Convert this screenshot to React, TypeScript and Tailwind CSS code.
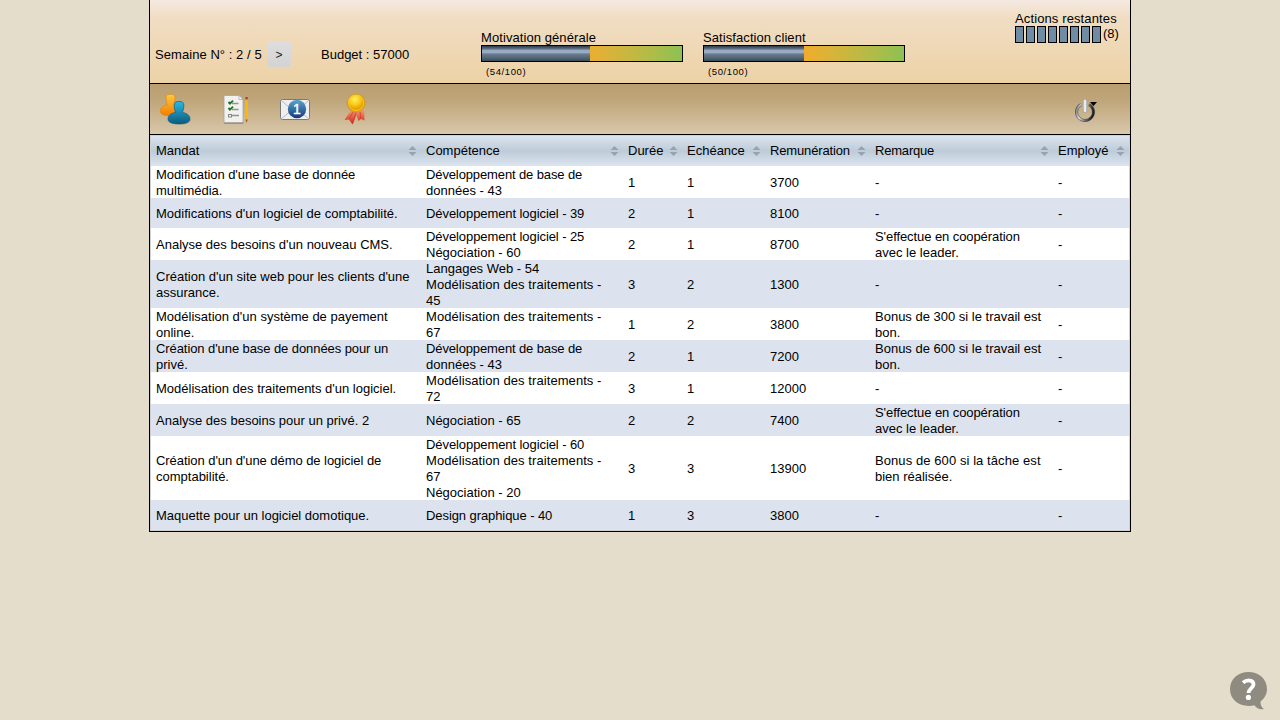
import React from 'react';

type Task = {
  title: string[];
  skills: string[];
  duration: number;
  due: number;
  pay: number;
  note: string[];
  height: string;
};

const tasks: Task[] = [
  { title: ["Modification d'une base de donnée", 'multimédia.'], skills: ['Développement de base de', 'données - 43'], duration: 1, due: 1, pay: 3700, note: ['-'], height: 'h-8' },
  { title: ["Modifications d'un logiciel de comptabilité."], skills: ['Développement logiciel - 39'], duration: 2, due: 1, pay: 8100, note: ['-'], height: 'h-[30px]' },
  { title: ["Analyse des besoins d'un nouveau CMS."], skills: ['Développement logiciel - 25', 'Négociation - 60'], duration: 2, due: 1, pay: 8700, note: ["S'effectue en coopération", 'avec le leader.'], height: 'h-8' },
  { title: ["Création d'un site web pour les clients d'une", 'assurance.'], skills: ['Langages Web - 54', 'Modélisation des traitements -', '45'], duration: 3, due: 2, pay: 1300, note: ['-'], height: 'h-12' },
  { title: ["Modélisation d'un système de payement", 'online.'], skills: ['Modélisation des traitements -', '67'], duration: 1, due: 2, pay: 3800, note: ['Bonus de 300 si le travail est', 'bon.'], height: 'h-8' },
  { title: ["Création d'une base de données pour un", 'privé.'], skills: ['Développement de base de', 'données - 43'], duration: 2, due: 1, pay: 7200, note: ['Bonus de 600 si le travail est', 'bon.'], height: 'h-8' },
  { title: ["Modélisation des traitements d'un logiciel."], skills: ['Modélisation des traitements -', '72'], duration: 3, due: 1, pay: 12000, note: ['-'], height: 'h-8' },
  { title: ['Analyse des besoins pour un privé. 2'], skills: ['Négociation - 65'], duration: 2, due: 2, pay: 7400, note: ["S'effectue en coopération", 'avec le leader.'], height: 'h-8' },
  { title: ["Création d'un d'une démo de logiciel de", 'comptabilité.'], skills: ['Développement logiciel - 60', 'Modélisation des traitements -', '67', 'Négociation - 20'], duration: 3, due: 3, pay: 13900, note: ['Bonus de 600 si la tâche est', 'bien réalisée.'], height: 'h-16' },
  { title: ['Maquette pour un logiciel domotique.'], skills: ['Design graphique - 40'], duration: 1, due: 3, pay: 3800, note: ['-'], height: 'h-[30px]' },
];

const headings = ['Mandat', 'Compétence', 'Durée', 'Echéance', 'Remunération', 'Remarque', 'Employé'];
const columns = 'grid grid-cols-[270px_202px_59px_83px_105px_183px_76px] items-center';

// Slight spacing adjustments, keyed by the start of the line.
const spacing: [string, string][] = [
  ['Développement de', 'tracking-[-0.12px]'],
  ['Développement logiciel', 'tracking-[-0.08px]'],
  ['Modélisation des traitements -', 'tracking-[0.07px]'],
  ['Modification d', 'tracking-[-0.06px]'],
  ["Création d'une base", 'tracking-[-0.08px]'],
  ["Création d'un d'une", 'tracking-[-0.06px]'],
  ["S'effectue", 'tracking-[-0.08px]'],
  ['Bonus de 600 si la', 'tracking-[0.08px]'],
  ['Design', 'tracking-[-0.08px]'],
  ['Remunération', 'tracking-[-0.15px]'],
  ['Remarque', 'tracking-[-0.2px]'],
];

function spacingFor(line: string) {
  return spacing.find(([start]) => line.startsWith(start))?.[1] ?? '';
}

function Lines({ items, pad = 'pl-[5px]' }: { items: string[]; pad?: string }) {
  return (
    <div className={pad}>
      {items.map((line, i) => (
        <div key={i} className={`h-4 leading-[18px] ${spacingFor(line)}`}>{line}</div>
      ))}
    </div>
  );
}

function Gauge({ label, value }: { label: string; value: number }) {
  return (
    <div className="w-[202px]">
      <div className="h-4 leading-[18px] tracking-[0.08px]">{label}</div>
      <div className="flex h-[17px] border border-black bg-linear-to-r from-[#f0ac2c] from-50% to-[#8cc152]">
        <div
          className="bg-[linear-gradient(#2b3d4b_0%,#5b6d7f_18%,#98abc3_30%,#98abc3_44%,#687c90_54%,#566a7c_75%,#3b4c59_100%)]"
          style={{ width: `${value}%` }}
        />
      </div>
      <div className="pt-[2px] pl-[5px] text-[9.5px] tracking-[0.6px]">({value}/100)</div>
    </div>
  );
}

function SortArrows() {
  return (
    <svg className="mr-1" width="9" height="10" viewBox="0 0 9 10" fill="#98a2b0">
      <path d="M4.500 0 8.500 4H.5ZM.5 6H8.500L4.500 10Z" />
    </svg>
  );
}

function UsersIcon() {
  return (
    <svg width="32" height="32" viewBox="0 0 32 32">
      <defs>
        <linearGradient id="amber" x2="0" y2="1"><stop stopColor="#ffc83e" /><stop offset="1" stopColor="#f57d00" /></linearGradient>
        <linearGradient id="teal" x2="0" y2="1"><stop stopColor="#2ab9e6" /><stop offset="1" stopColor="#0c5a7c" /></linearGradient>
      </defs>
      <path d="M7 4C7 2 8.500 1.300 11.500 1.300S16 2 16 4C16 7 16 9 15 12 18 12.500 20 15 20 18 20 21.500 17 22.800 11 22.800S1.300 21.500 1.300 18C1.300 14.500 4 12.500 8.300 12 7.300 9 7 7 7 4Z" fill="url(#amber)" stroke="#d9881a" strokeWidth=".7" />
      <path d="M15.200 12C15.200 9.500 16.500 8.500 20 8.500S24.800 9.500 24.800 12C24.800 15 24.500 17 23.300 19.500 28 20 31 22.500 31 26 31 29.500 27 31 20 31S9 29.500 9 26C9 22.500 12 20 16.700 19.500 15.500 17 15.200 15 15.200 12Z" fill="url(#teal)" stroke="#12607f" strokeWidth=".7" />
    </svg>
  );
}

function ChecklistIcon() {
  return (
    <svg width="32" height="32" viewBox="0 0 32 32">
      <path d="M5 30H24.500" stroke="#77684d" strokeWidth="1" />
      <path d="M5 2.500H20L24 7V29.500H5Z" fill="#f1f1f0" stroke="#a7a49e" strokeWidth=".8" />
      <path d="M20 2.500V6.500H24Z" fill="#fff" stroke="#aaa" strokeWidth=".8" />
      <path d="M13 10.500H19.500M13 16.500H19.500M13 22.500H20" stroke="#92938f" strokeWidth="1.500" />
      <path d="M9.500 9 11 10.700 14 7.700M9.500 15 11 16.700 14 13.700" stroke="#247020" strokeWidth="1.900" fill="none" />
      <rect x="9.500" y="21.500" width="3" height="2.500" fill="none" stroke="#888" />
      <path d="M26.500 6H28.700V27L27.600 29.500 26.500 27Z" fill="#fbb90d" />
      <path d="M26.500 4H28.700V6.500H26.500Z" fill="#a83b3b" />
      <path d="M26.500 26.500H28.700L27.600 29.800Z" fill="#8a5a35" />
    </svg>
  );
}

function MailIcon() {
  return (
    <div className="relative flex h-8 w-8 items-center justify-center">
      <svg className="absolute inset-0" width="32" height="32" viewBox="0 0 32 32">
        <defs>
          <linearGradient id="blue" x2="0" y2="1"><stop stopColor="#5aa5cf" /><stop offset="1" stopColor="#153a7b" /></linearGradient>
        </defs>
        <rect x="1.500" y="6.500" width="29" height="20" rx="2" fill="#efefef" stroke="#777a7d" />
        <path d="M2.500 7.500 13 17 2.500 25.500M29.500 7.500 19 17 29.500 25.500" fill="none" stroke="#b9babb" />
        <circle cx="18" cy="16" r="9.200" fill="url(#blue)" />
      </svg>
      <span className="relative left-[2px] text-[14px] leading-4 text-white [-webkit-text-stroke:0.4px_white]">1</span>
    </div>
  );
}

function MedalIcon() {
  return (
    <svg width="32" height="32" viewBox="0 0 32 32">
      <defs>
        <radialGradient id="gold" cx=".42" cy=".3"><stop stopColor="#fff056" /><stop offset=".6" stopColor="#f9cb20" /><stop offset="1" stopColor="#e9a400" /></radialGradient>
        <linearGradient id="ribbon" x2="0" y2="1"><stop stopColor="#f5a27b" /><stop offset="1" stopColor="#cf2413" /></linearGradient>
      </defs>
      <path d="M12 17 5.500 27 10 26.500 13.500 31.500 19 19ZM16.500 19 19.500 28 22 26 25.500 27.500 25 16Z" fill="url(#ribbon)" />
      <path d="M14 19 10 26.500M21 19 22 26M17 19 13.500 30.500" stroke="#cf3c25" strokeWidth=".8" />
      <circle cx="17.200" cy="10" r="9" fill="url(#gold)" stroke="#cd9828" strokeWidth=".8" />
      <circle cx="17.200" cy="10" r="7.500" fill="none" stroke="#f5cc2c" strokeWidth=".8" />
    </svg>
  );
}

function PowerIcon() {
  return (
    <svg width="24" height="24" viewBox="0 0 24 24" fill="none">
      <defs>
        <linearGradient id="steel" x2="1" y2=".2"><stop stopColor="#707070" /><stop offset=".3" stopColor="#ddd" /><stop offset=".65" stopColor="#777" /><stop offset="1" stopColor="#222" /></linearGradient>
      </defs>
      <path d="M7 5.500A8.500 8.500 0 1 0 15 5.500" stroke="#555" strokeWidth="3" />
      <path d="M7 5.500A8.500 8.500 0 1 0 15 5.500" stroke="url(#steel)" strokeWidth="1.800" />
      <path d="M11 2V12" stroke="#999" strokeWidth="4.200" strokeLinecap="round" />
      <path d="M11 2V12" stroke="#e8ecf0" strokeWidth="2.800" strokeLinecap="round" />
      <path d="M16 3H23L19.500 7Z" fill="#000" />
    </svg>
  );
}

export default function App() {
  return (
    <div className="h-[720px] overflow-hidden bg-[#e4ddcb] font-['Liberation_Sans',Arial,sans-serif] text-[13px] leading-4 text-black">
      <div className="mx-auto w-[982px] border-x border-b border-black">
        <header className="flex h-[84px] border-b border-black bg-[linear-gradient(#f5eae2_0%,#f0ddc3_20%,#edd2a6_100%)] pl-[5px]">
          <div className="flex w-[326px] items-center pt-[25px]">
            <span className="w-[112px] pt-[2px] tracking-[0.06px] whitespace-nowrap">Semaine N° : 2 / 5</span>
            <button className="h-[26px] w-6 rounded-[3px] bg-linear-to-b from-[#dedede] to-[#d3d3d3] pt-px text-[12px] text-[#222]">&gt;</button>
            <span className="ml-[30px] pt-[2px] whitespace-nowrap">Budget : 57000</span>
          </div>
          <div className="flex gap-5 pt-[29px]">
            <Gauge label="Motivation générale" value={54} />
            <Gauge label="Satisfaction client" value={50} />
          </div>
          <div className="ml-[110px] pt-[10px]">
            <div className="h-4 leading-[18px] tracking-[0.12px] whitespace-nowrap">Actions restantes</div>
            <div className="flex gap-[2px]">
              {Array.from({ length: 8 }, (_, i) => (
                <div key={i} className="h-[17px] w-[9px] border border-black bg-[#708ba4]" />
              ))}
              <span>(8)</span>
            </div>
          </div>
        </header>
        <nav className="flex h-[51px] items-center border-b border-black bg-[linear-gradient(#b99e70_0%,#c0a67b_35%,#d9c8ab_100%)] pl-[9px]">
          <div className="flex grow gap-7">
            <UsersIcon />
            <ChecklistIcon />
            <MailIcon />
            <MedalIcon />
          </div>
          <div className="mr-8 pt-1"><PowerIcon /></div>
        </nav>
        <main className="border border-[#cdd0d4]">
          <div className={`${columns} h-[30px] bg-linear-to-b from-[#dce3ed] via-[#bdccda] to-[#dce5ef]`}>
            {headings.map((h) => (
              <div key={h} className="flex items-center justify-between pl-[5px]">
                <span className={spacingFor(h)}>{h}</span>
                <SortArrows />
              </div>
            ))}
          </div>
          {tasks.map((t, i) => (
            <div key={i} className={`${columns} ${t.height} whitespace-nowrap ${i % 2 ? 'bg-[#dce3ee]' : 'bg-white'}`}>
              <Lines items={t.title} />
              <Lines items={t.skills} />
              <Lines items={[String(t.duration)]} />
              <Lines items={[String(t.due)]} />
              <Lines items={[String(t.pay)]} />
              <Lines items={t.note} />
              <Lines items={['-']} />
            </div>
          ))}
        </main>
      </div>
      <div className="fixed right-3 bottom-[10px] h-[38px] w-[38px]">
        <svg width="38" height="38" viewBox="0 0 38 38">
          <path d="M18.500 0C29 0 37 7 37 17 37 22 34.500 26.500 30.500 29.500 30.500 33 31.500 35.500 34 37 29.500 38 26 36 24.500 33.300 11 36 0 29 0 17 0 7 8 0 18.500 0Z" fill="#8f8b81" />
          <path d="M13 10.600C17 7.300 23.500 7.800 23.500 12.300 23.500 16.300 18.500 16.500 18.500 21" fill="none" stroke="#fff" strokeWidth="3.800" />
          <circle cx="18.400" cy="25.400" r="2.600" fill="#fff" />
        </svg>
      </div>
    </div>
  );
}
